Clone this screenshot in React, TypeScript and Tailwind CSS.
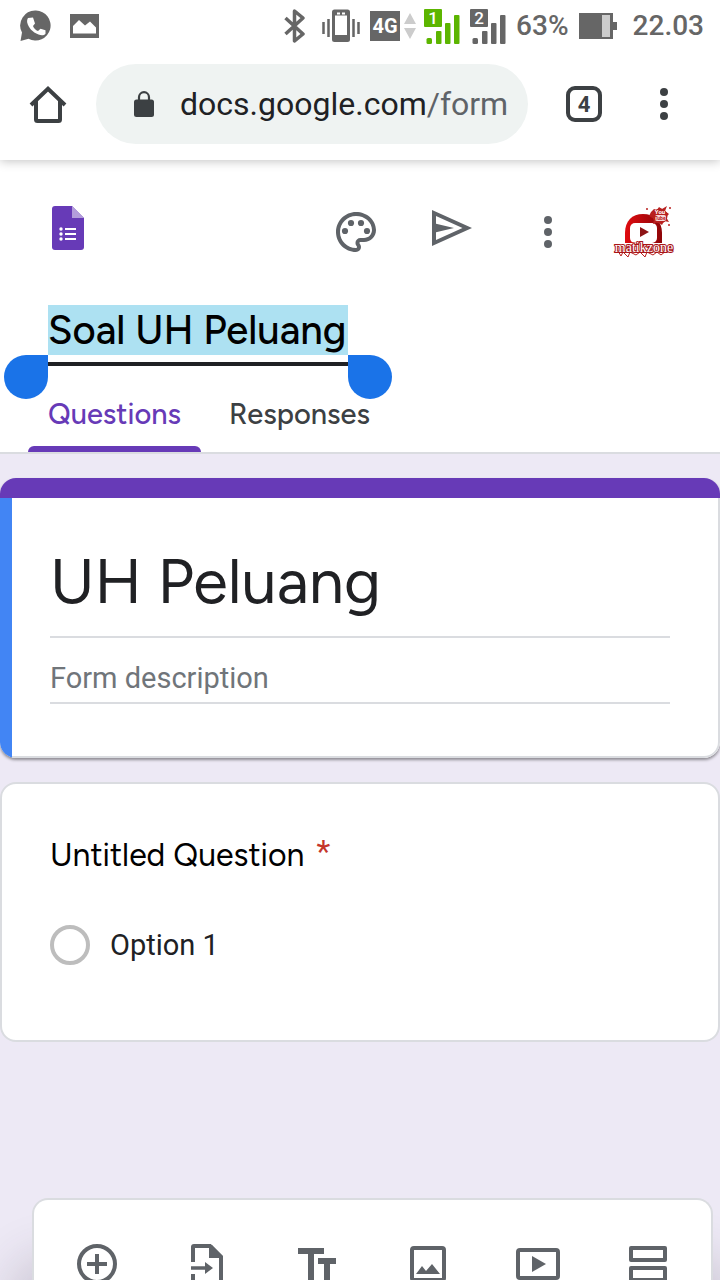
import React from 'react';

const WhatsAppIcon = () => (
  <svg width="32" height="32" viewBox="0 0 32 32" aria-hidden="true">
    <path d="M16 0.500a15 15 0 1 1-7.500 28.200L0.500 31l1.500-8.500A15 15 0 0 1 16 0.500z" fill="#666" />
    <path d="M8 8l5-.5 2 6-2 2.500c1 2.500 2.500 4 5 5l2.500-2.200 5 1.500v3.500c-1.500 1.800-4 2-7 .8C12.500 22 8.500 18 7.200 12.500 7 11 7.200 9 8 8z" fill="#fff" />
  </svg>
);

const GalleryIcon = () => (
  <svg width="29" height="24" viewBox="0 0 29 24" aria-hidden="true">
    <rect width="29" height="24" fill="#666" />
    <path d="M3 19.500V12l6-6 6 5.500 5-4 6 6v6z" fill="#fff" />
  </svg>
);

const BluetoothIcon = () => (
  <svg width="22" height="34" viewBox="0 0 22 34" fill="none" stroke="#666" strokeWidth="3.500" aria-hidden="true">
    <path d="M1.500 9l17.500 16-8.500 7V2l8.500 7L1.500 25" strokeLinejoin="round" />
  </svg>
);

const VibrateIcon = () => (
  <svg width="38" height="34" viewBox="0 0 38 34" aria-hidden="true">
    <rect x="11.500" y="2" width="15" height="29.500" rx="1" fill="none" stroke="#666" strokeWidth="3" />
    <path d="M12 4.500h14M12 28h14" stroke="#666" strokeWidth="4" />
    <path d="M15 4.500h3M20 4.500h3" stroke="#fff" strokeWidth="1.800" />
    <path d="M1.500 13v12M6.500 10v18M31.500 10v18M36.500 13v12" stroke="#666" strokeWidth="2.500" />
  </svg>
);

const DataArrowsIcon = () => (
  <svg width="12" height="26" viewBox="0 0 12 26" fill="#ccc" aria-hidden="true">
    <path d="M6 0l6 11H0zM6 26l6-11H0z" />
  </svg>
);

const SignalIcon = ({ sim, color }: { sim: string; color: string }) => (
  <svg width="36" height="38" viewBox="0 -2 36 38" fill={color} role="img" aria-label={`SIM ${sim}`}>
    <rect width="18" height="18" rx="1" />
    <rect x="2.500" y="29" width="5.500" height="6" rx="1.500" />
    <rect x="12" y="22" width="5.500" height="13" rx="1" />
    <rect x="21" y="14" width="5.500" height="21" rx="1" />
    <rect x="30" y="6" width="5.500" height="29" rx="1" />
    <text x="9" y="15" textAnchor="middle" fill="#fff" fontSize="17" className="font-[Roboto,sans-serif] font-medium">{sim}</text>
  </svg>
);

const BatteryIcon = () => (
  <svg width="38" height="26" viewBox="0 0 38 26" aria-hidden="true">
    <path d="M0 0h34v9h4v8h-4v9H0z" fill="#666" />
    <rect x="23" y="2" width="8" height="22" fill="#ccc" />
  </svg>
);

const HomeIcon = () => (
  <svg width="40" height="40" viewBox="0 0 40 40" fill="none" stroke="#3c4043" strokeWidth="4" aria-hidden="true">
    <path d="M3 21L20 4.800 37 21" />
    <path d="M8 17v18.500a1.500 1.500 0 0 0 1.500 1.500h21a1.500 1.500 0 0 0 1.500-1.500V17" />
  </svg>
);

const LockIcon = () => (
  <svg width="20" height="26" viewBox="0 0 20 26" className="shrink-0" aria-hidden="true">
    <rect y="8.500" width="20" height="17.500" rx="2.500" fill="#3c4043" />
    <path d="M5 9.500V6.200a5 5 0 0 1 10 0v3.300" fill="none" stroke="#3c4043" strokeWidth="2.200" />
  </svg>
);

const DotsIcon = ({ color }: { color: string }) => (
  <svg width="8" height="32" viewBox="0 0 8 32" fill={color} aria-hidden="true">
    <circle cx="4" cy="4" r="4" />
    <circle cx="4" cy="16" r="4" />
    <circle cx="4" cy="28" r="4" />
  </svg>
);

const FormsLogo = () => (
  <svg width="32" height="44" viewBox="0 0 32 44" aria-hidden="true">
    <path d="M3 0h17l12 12v29a3 3 0 0 1-3 3H3a3 3 0 0 1-3-3V3a3 3 0 0 1 3-3z" fill="#673ab7" />
    <path d="M20 0l12 12H20z" fill="#b39ddb" />
    <path d="M13 23h11M13 28h11M13 33h11" stroke="#fff" strokeWidth="2" />
    <circle cx="9" cy="23" r="1.700" fill="#fff" />
    <circle cx="9" cy="28" r="1.700" fill="#fff" />
    <circle cx="9" cy="33" r="1.700" fill="#fff" />
  </svg>
);

const PaletteIcon = () => (
  <svg width="48" height="48" viewBox="0 0 24 24" fill="#5f6368" aria-hidden="true">
    <path d="M12 22C6.490 22 2 17.510 2 12S6.490 2 12 2s10 4.040 10 9c0 3.310-2.690 6-6 6h-1.770c-.28 0-.5.22-.5.5 0 .12.05.23.13.33.41.47.64 1.060.64 1.670A2.500 2.500 0 0 1 12 22zm0-18c-4.410 0-8 3.590-8 8s3.590 8 8 8c.28 0 .5-.22.5-.5a.54.54 0 0 0-.14-.35c-.41-.46-.63-1.050-.63-1.650a2.500 2.500 0 0 1 2.500-2.500H16c2.210 0 4-1.790 4-4 0-3.860-3.590-7-8-7z" />
    <circle cx="6.500" cy="11.500" r="1.550" />
    <circle cx="9.500" cy="7.500" r="1.550" />
    <circle cx="14.500" cy="7.500" r="1.550" />
    <circle cx="17.500" cy="11.500" r="1.550" />
  </svg>
);

const SendIcon = () => (
  <svg width="40" height="44" viewBox="0 0 40 44" fill="#5f6368" aria-hidden="true">
    <path fillRule="evenodd" d="M0 0l40 18L0 36zM4 6v24l26.500-12z" />
    <path d="M3 13.500L22 18 3 22.500z" />
  </svg>
);

const ChannelAvatar = () => (
  <svg width="64" height="56" viewBox="-2 -1 64 56" role="img" aria-label="matikzone">
    <defs>
      <linearGradient id="ring" x1="0" x2="1">
        <stop offset="0" stopColor="#e00b10" />
        <stop offset="1" stopColor="#8d0508" />
      </linearGradient>
    </defs>
    <path d="M11 38V28C11 16 18 9 29 9s19 7 19 19v10z" fill="url(#ring)" />
    <rect x="16" y="18" width="27" height="20" rx="5" fill="#fff" />
    <path d="M26 22l9 5-9 5z" fill="#8d1416" />
    <path d="M37 7l3-3 3 1 2-3 3 2 5-3-2 5 4 3-3 3 3 5-5-1-2 4-4-3-5 2 1-5-5-3z" fill="#b8201f" />
    <circle cx="46" cy="11" r="7.500" fill="#b8201f" />
    <circle cx="33" cy="4" r="1" fill="#b8201f" />
    <circle cx="56" cy="3" r="1" fill="#b8201f" />
    <circle cx="55" cy="20" r="1" fill="#b8201f" />
    <rect x="41" y="10" width="11" height="6" rx="2" fill="#f7d9d9" />
    <text x="46" y="9" textAnchor="middle" fontSize="6" fill="#fff" className="font-[Roboto,sans-serif] font-bold">You</text>
    <text x="46" y="15" textAnchor="middle" fontSize="5" fill="#b8201f" className="font-[Roboto,sans-serif] font-bold">Tube</text>
    <path d="M4 46l3 5 2-4 5 5 2-5 6 3 4-3 5 5 2-5 6 3 4-3 4 3 5-4" fill="none" stroke="#b8201f" strokeWidth="1" />
    <text x="30" y="47" textAnchor="middle" fontSize="14" fill="#fff" stroke="#a81417" strokeWidth="2" paintOrder="stroke" className="font-['Liberation_Serif',serif]">matikzone</text>
  </svg>
);

const tools = [
  {
    label: 'Add question',
    icon: (
      <>
        <circle cx="24" cy="24" r="18" fill="none" stroke="#5f6368" strokeWidth="4" />
        <path d="M24 14v20M14 24h20" stroke="#5f6368" strokeWidth="4" />
      </>
    ),
  },
  {
    label: 'Import questions',
    icon: (
      <>
        <path d="M10 22V7a1 1 0 0 1 1-1h16l11 11v25H10v-8" fill="none" stroke="#5f6368" strokeWidth="4" />
        <path d="M26 5h3l11 11v2H26zM22 22l8 6-8 6z" fill="#5f6368" />
        <path d="M8 28h16" stroke="#5f6368" strokeWidth="3.500" />
      </>
    ),
  },
  {
    label: 'Add title and description',
    icon: <path d="M5 8h26v6H21v26h-6V14H5zM25 18h18v6h-6v16h-6V24h-6z" fill="#5f6368" />,
  },
  {
    label: 'Add image',
    icon: (
      <>
        <rect x="8" y="8" width="32" height="32" rx="2" fill="none" stroke="#5f6368" strokeWidth="4" />
        <path d="M12 34l6-8 4 5 6-7 8 10z" fill="#5f6368" />
      </>
    ),
  },
  {
    label: 'Add video',
    icon: (
      <>
        <rect x="4" y="10" width="40" height="28" rx="2" fill="none" stroke="#5f6368" strokeWidth="4" />
        <path d="M18 16l14 8-14 8z" fill="#5f6368" />
      </>
    ),
  },
  {
    label: 'Add section',
    icon: (
      <g fill="none" stroke="#5f6368" strokeWidth="4" strokeLinejoin="round">
        <rect x="7" y="8" width="34" height="12" />
        <rect x="7" y="28" width="34" height="12" />
      </g>
    ),
  },
];

const StatusBar = () => (
  <div className="flex h-12 items-center justify-between pt-1 pr-4 pl-5 text-[28px] leading-8 font-medium text-[#666]">
    <div className="flex items-center gap-[18px]">
      <WhatsAppIcon />
      <GalleryIcon />
    </div>
    <div className="flex items-center">
      <div className="flex items-center gap-4">
        <BluetoothIcon />
        <VibrateIcon />
      </div>
      <div className="ml-2.5 flex items-center gap-1">
        <span className="flex h-[30px] w-[30px] items-center justify-center bg-[#666] text-[20px] font-bold text-white">4G</span>
        <DataArrowsIcon />
      </div>
      <div className="ml-2 flex items-center gap-2.5">
        <SignalIcon sim="1" color="#5cb500" />
        <SignalIcon sim="2" color="#666" />
      </div>
      <span className="ml-2.5">63%</span>
      <span className="ml-2.5"><BatteryIcon /></span>
      <span className="ml-4">22.03</span>
    </div>
  </div>
);

const BrowserBar = () => (
  <div className="flex h-28 items-center">
    <button aria-label="Home" className="flex w-24 justify-center"><HomeIcon /></button>
    <button className="flex h-20 min-w-0 flex-1 items-center gap-[26px] rounded-full bg-[#eff3f2] pr-4 pl-[38px] text-left text-[32px] leading-10 text-[#202124]">
      <LockIcon />
      <span className="whitespace-nowrap">docs.google.com<span className="text-[#5f6368]">/form</span></span>
    </button>
    <button aria-label="Tabs" className="flex w-28 justify-center">
      <span className="flex h-9 w-9 items-center justify-center rounded-[9px] border-4 border-[#3c4043] pt-0.5 text-[22px] leading-none font-bold text-[#3c4043]">4</span>
    </button>
    <button aria-label="Browser menu" className="mr-6 flex w-14 justify-start pl-5"><DotsIcon color="#3c4043" /></button>
  </div>
);

const FormHeader = () => (
  <header className="border-b-2 border-[#dadce0] bg-white font-[Figtree,Lato,sans-serif]">
    <div className="flex h-36 items-center justify-between pr-7 pl-[52px]">
      <a href="#forms" aria-label="Forms home" className="pb-2"><FormsLogo /></a>
      <div className="flex items-center">
        <button aria-label="Customize theme" className="flex w-24 justify-center"><PaletteIcon /></button>
        <button aria-label="Send" className="flex w-24 justify-center"><SendIcon /></button>
        <button aria-label="More" className="flex w-24 justify-center"><DotsIcon color="#5f6368" /></button>
        <button aria-label="Account" className="flex w-24 justify-center"><ChannelAvatar /></button>
      </div>
    </div>
    <div className="relative mt-px ml-12 w-[300px] border-b-4 border-[#202124] pb-[7px]">
      <input aria-label="Document title" defaultValue="Soal UH Peluang" className="block h-[50px] w-full bg-[#ade1f2] text-[40px] font-medium text-black outline-none" />
      <span className="absolute top-[50px] right-full h-11 w-11 rounded-full rounded-tr-none bg-[#1a73e8]" />
      <span className="absolute top-[50px] left-full h-11 w-11 rounded-full rounded-tl-none bg-[#1a73e8]" />
    </div>
    <nav className="ml-7 flex gap-2 text-[29px] leading-8 font-medium">
      <button className="flex h-[86px] flex-col justify-between px-5 pt-8 text-[#673ab7]">
        Questions
        <span className="-mx-5 h-1.5 self-stretch rounded-t-md bg-[#673ab7]" />
      </button>
      <button className="flex h-[86px] flex-col px-5 pt-8 text-[#3c4043]">Responses</button>
    </nav>
  </header>
);

const TitleCard = () => (
  <section className="overflow-hidden rounded-2xl bg-white shadow-[0_2px_3px_rgba(0,0,0,0.4)]">
    <div className="h-5 bg-[#673ab7]" />
    <div className="flex">
      <div className="w-3 bg-[#4285f4]" />
      <div className="flex-1 rounded-br-2xl border-r-2 border-b-2 border-[#dadce0] pt-10 pr-12 pb-[52px] pl-[38px]">
        <input aria-label="Form title" defaultValue="UH Peluang" className="block h-[100px] w-full border-b-2 border-[#dadce0] pb-3 font-[Figtree,Lato,sans-serif] text-[63px] text-[#202124] outline-none" />
        <input aria-label="Form description" placeholder="Form description" className="mt-4 block h-[50px] w-full border-b-2 border-[#dadce0] text-[29px] text-[#202124] outline-none placeholder:text-[#70757a]" />
      </div>
    </div>
  </section>
);

const QuestionCard = () => (
  <section className="rounded-2xl border-2 border-[#dadce0] bg-white px-12 pt-[47px] pb-[75px]">
    <fieldset>
      <legend className="flex gap-3 font-[Figtree,Lato,sans-serif] text-[32px] leading-12 text-black">
        Untitled Question <span className="font-[Roboto,sans-serif] leading-10 text-[#c5362b]">*</span>
      </legend>
      <label className="mt-[46px] flex items-center gap-5 text-[29px] leading-10 text-[#202124]">
        <input type="radio" name="question" className="h-10 w-10 appearance-none rounded-full border-4 border-[#bdbdbd]" />
        Option 1
      </label>
    </fieldset>
  </section>
);

const Toolbar = () => (
  <div className="mt-auto mr-[7px] ml-8 flex h-[82px] items-start rounded-t-2xl border-2 border-b-0 border-[#dadce0] bg-white px-2 pt-10 shadow-[0_80px_50px_20px_rgba(60,50,70,0.2)]">
    {tools.map((tool) => (
      <button key={tool.label} aria-label={tool.label} className="flex flex-1 justify-center">
        <svg width="48" height="48" viewBox="0 0 48 48" aria-hidden="true">{tool.icon}</svg>
      </button>
    ))}
  </div>
);

export default function App() {
  return (
    <div className="flex h-screen flex-col overflow-hidden bg-[#ede9f5] font-[Roboto,sans-serif]">
      <div className="z-10 bg-white shadow-[0_1px_10px_rgba(0,0,0,0.25)]">
        <StatusBar />
        <BrowserBar />
      </div>
      <FormHeader />
      <main className="flex flex-1 flex-col pt-6">
        <div className="flex flex-col gap-6">
          <TitleCard />
          <QuestionCard />
        </div>
        <Toolbar />
      </main>
    </div>
  );
}
